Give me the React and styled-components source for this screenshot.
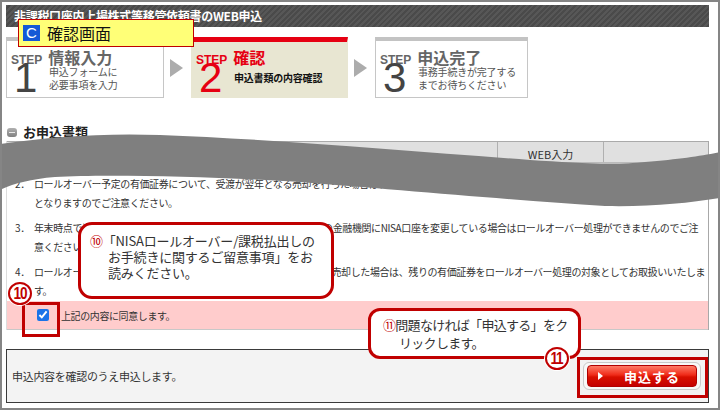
import React from 'react';
import styled, { createGlobalStyle } from 'styled-components';

const jp = `"Noto Sans CJK JP", "Liberation Sans", sans-serif`;
const latin = `"Liberation Sans", Arial, sans-serif`;
const red = '#c00000';

const GlobalStyle = createGlobalStyle`
    html, body { margin: 0; padding: 0; background: #fff; }
    body { font-family: ${jp}; color: #333; }
    * { box-sizing: border-box; }
`;

// Page frame (overlays below are placed from its padding box, so 2px less than page coords)
const Frame = styled.div`
    position: relative;
    width: 720px;
    height: 410px;
    border: 2px solid #858585;
    padding: 3px 9px 0 4px;
    overflow: hidden;
`;

const TitleBar = styled.div`
    height: 22px;
    padding-left: 8px;
    background: repeating-linear-gradient(135deg, #575757 0 2px, #4a4a4a 2px 4px);
    color: #fff;
    font: bold 12px/22px ${jp};
    letter-spacing: -0.3px;
`;

// Step indicator
const Steps = styled.div`
    display: flex;
    align-items: center;
    margin-top: 10px;
    height: 61px;
`;

const StepBox = styled.div`
    width: ${p => p.$w}px;
    height: 61px;
    background: ${p => (p.$active ? '#e8e6d2' : '#fff')};
    border: 1px solid ${p => (p.$active ? '#e8e6d2' : '#c6c6c6')};
    border-top: ${p => (p.$active ? '5px solid #e60012' : '4px solid #c3c3c3')};
    padding: ${p => (p.$active ? '3px' : '4px')} 0 0 4px;
`;

const StepHead = styled.div`
    display: flex;
    align-items: baseline;
    gap: 6px;
    height: 18px;
    line-height: 18px;
`;

const StepLabel = styled.span`
    font: bold 12px ${latin};
    color: ${p => (p.$active ? '#e60012' : '#666')};
`;

const StepTitle = styled.span`
    font: bold 16px ${jp};
    color: ${p => (p.$active ? '#e60012' : '#666')};
`;

const StepBody = styled.div`
    display: flex;
    align-items: center;
    margin-top: -3px;
`;

const StepNum = styled.div`
    width: 38px;
    padding-left: 3px;
    font: 42px/36px ${latin};
    color: ${p => (p.$active ? '#e60012' : '#444')};
`;

const StepDesc = styled.div`
    font: ${p => (p.$active ? 'bold' : 'normal')} 10px/13.5px ${jp};
    color: ${p => (p.$active ? '#111' : '#555')};
    letter-spacing: -0.2px;
`;

const StepArrow = styled.div`
    width: 0;
    height: 0;
    margin: 0 8px 0 6px;
    border-left: 13px solid #acacac;
    border-top: 9px solid transparent;
    border-bottom: 9px solid transparent;
`;

// Section heading
const Heading = styled.div`
    display: flex;
    align-items: center;
    gap: 6px;
    margin-top: 26px;
    padding-left: 1px;
    height: 16px;
    font: bold 13px/16px ${jp};
    color: #222;
`;

const HeadIcon = styled.span`
    position: relative;
    width: 10px;
    height: 9px;
    border-radius: 3px;
    background: linear-gradient(#b0b0b0, #808080);

    &::after {
        content: "";
        position: absolute;
        left: 2px;
        right: 2px;
        top: 4px;
        height: 1px;
        background: #e8e8e8;
    }
`;

// Table
const Table = styled.div`
    margin-top: 1px;
    border-left: 1px solid #ddd;
    border-right: 1px solid #a8a8a8;
`;

const HeaderRow = styled.div`
    display: grid;
    grid-template-columns: 490px 106px 1fr;
    height: 22px;
    background: #e0e0e0;
    border-top: 1px solid #aaa;
    border-bottom: 1px solid #bbb;
`;

const HeaderCell = styled.div`
    border-left: ${p => (p.$first ? 'none' : '1px solid #b0b0b0')};
    text-align: center;
    padding-top: 5px;
    font: 11px/15px ${jp};
    color: #333;
`;

const NoteList = styled.div`
    padding: 11px 0 1px 8px;
    overflow: hidden;
`;

const NoteItem = styled.div`
    display: flex;
    margin-bottom: ${p => (p.$last ? 0 : 6)}px;
    font: 10px/19px ${jp};
    letter-spacing: -0.4px;
    color: #333;
    white-space: nowrap;
`;

const NoteNum = styled.span`
    flex: none;
    width: 19px;
`;

const AgreeRow = styled.label`
    display: flex;
    align-items: center;
    height: 29px;
    padding-left: 30px;
    background: #ffcccc;
    border-bottom: 1px solid #c8c8c8;
    font: 10px ${jp};
    letter-spacing: -0.4px;
    color: #333;
`;

const Check = styled.input`
    width: 12px;
    height: 12px;
    margin: 0 12px 0 0;
    accent-color: #1a73e8;
`;

// Submit area
const SubmitBox = styled.div`
    display: flex;
    align-items: center;
    justify-content: space-between;
    margin-top: 19px;
    height: 54px;
    padding: 0 7px 0 5px;
    border: 1px solid #3a3a3a;
    background: #f3f3f3;
    font: 11px ${jp};
    letter-spacing: -0.3px;
    color: #333;
`;

const SubmitOuter = styled.div`
    width: 118px;
    height: 28px;
    padding: 2px 3px;
    border: 1px solid #c9c9c9;
    border-radius: 6px;
    background: #f8f8f8;
`;

const SubmitButton = styled.button`
    display: flex;
    align-items: center;
    width: 100%;
    height: 100%;
    padding: 0 0 0 10px;
    border: 1px solid #b00000;
    border-radius: 4px;
    background: linear-gradient(#ff7a66, #ef2a18 45%, #d81000 55%, #c40000);
    color: #fff;
    font: bold 13px ${jp};
    letter-spacing: 1px;
    cursor: pointer;
`;

const PlayMark = styled.span`
    width: 0;
    height: 0;
    margin-right: 21px;
    border-left: 5px solid #fff;
    border-top: 4px solid transparent;
    border-bottom: 4px solid transparent;
`;

// Annotation overlays
const ScreenLabel = styled.div`
    position: absolute;
    left: 16px;
    top: 17px;
    width: 176px;
    height: 28px;
    display: flex;
    align-items: center;
    gap: 7px;
    padding-left: 4px;
    border: 1px solid #c00000;
    background: #ffff77;
    font: 16px ${jp};
    color: #111;
`;

const LabelBadge = styled.span`
    width: 17px;
    height: 16px;
    background: #1559d6;
    color: #fff;
    font: 15px/16px ${latin};
    text-align: center;
`;

const Band = styled.svg`
    position: absolute;
    left: -2px;
    top: 123px;
`;

const Callout = styled.div`
    position: absolute;
    left: ${p => p.$x - 2}px;
    top: ${p => p.$y - 2}px;
    width: ${p => p.$w}px;
    height: ${p => p.$h}px;
    padding: ${p => p.$pad};
    border: 3px solid ${red};
    border-radius: ${p => p.$r}px;
    background: #fff;
    font: 13px/${p => p.$lh}px ${jp};
    letter-spacing: ${p => p.$ls}px;
    text-indent: ${p => p.$indent}px;
    white-space: nowrap;
    color: #333;
`;

const Circled = styled.span`
    color: ${red};
`;

const Highlight = styled.div`
    position: absolute;
    left: ${p => p.$x - 2}px;
    top: ${p => p.$y - 2}px;
    width: ${p => p.$w}px;
    height: ${p => p.$h}px;
    border: 3px solid ${red};
`;

const NumBadge = styled.div`
    position: absolute;
    left: ${p => p.$x - 2}px;
    top: ${p => p.$y - 2}px;
    width: 24px;
    height: 23px;
    display: flex;
    align-items: center;
    justify-content: center;
    border: 2px solid ${red};
    border-radius: 50%;
    background: #fff;
    box-shadow: 0 0 0 1px #fff;
    color: ${red};
    font: bold 17px/1 ${latin};
    letter-spacing: -1.5px;

    span {
        display: inline-block;
        transform: scaleX(0.8);
        margin-left: -1px;
    }
`;

const notes = [
    {
        num: '2．',
        lines: [
            'ロールオーバー予定の有価証券について、受渡が翌年となる売却を行った場合は、当該有価証券はロールオーバーの対象外',
            'となりますのでご注意ください。',
        ],
    },
    {
        num: '3．',
        lines: [
            '年末時点で当社にNISA口座が開設されていない場合、または既に他の金融機関にNISA口座を変更している場合はロールオーバー処理ができませんのでご注',
            '意ください。',
        ],
    },
    {
        num: '4．',
        lines: [
            'ロールオーバー予定の有価証券のうち、一部の銘柄のみを年末までに売却した場合は、残りの有価証券をロールオーバー処理の対象としてお取扱いいたしま',
            'す。',
        ],
    },
];

const steps = [
    { n: '1', title: '情報入力', desc: ['申込フォームに', '必要事項を入力'], w: 158 },
    { n: '2', title: '確認', desc: ['申込書類の内容確認'], w: 157, active: true },
    { n: '3', title: '申込完了', desc: ['事務手続きが完了する', 'までお待ちください'], w: 153 },
];

const App = () => {
    return (
        <>
            <GlobalStyle />
            <Frame>
                <TitleBar>非課税口座内上場株式等移管依頼書のWEB申込</TitleBar>

                <Steps>
                    {steps.map((s, i) => (
                        <React.Fragment key={s.n}>
                            {i > 0 && <StepArrow />}
                            <StepBox $w={s.w} $active={s.active}>
                                <StepHead>
                                    <StepLabel $active={s.active}>STEP</StepLabel>
                                    <StepTitle $active={s.active}>{s.title}</StepTitle>
                                </StepHead>
                                <StepBody>
                                    <StepNum $active={s.active}>{s.n}</StepNum>
                                    <StepDesc $active={s.active}>
                                        {s.desc.map(d => <div key={d}>{d}</div>)}
                                    </StepDesc>
                                </StepBody>
                            </StepBox>
                        </React.Fragment>
                    ))}
                </Steps>

                <Heading>
                    <HeadIcon />
                    お申込書類
                </Heading>

                <Table>
                    <HeaderRow>
                        <HeaderCell $first />
                        <HeaderCell>WEB入力</HeaderCell>
                        <HeaderCell />
                    </HeaderRow>
                    <NoteList>
                        {notes.map((n, i) => (
                            <NoteItem key={n.num} $last={i === notes.length - 1}>
                                <NoteNum>{n.num}</NoteNum>
                                <div>
                                    {n.lines.map(l => <div key={l}>{l}</div>)}
                                </div>
                            </NoteItem>
                        ))}
                    </NoteList>
                    <AgreeRow>
                        <Check type="checkbox" defaultChecked />
                        上記の内容に同意します。
                    </AgreeRow>
                </Table>

                <SubmitBox>
                    申込内容を確認のうえ申込します。
                    <SubmitOuter>
                        <SubmitButton type="button">
                            <PlayMark />
                            申込する
                        </SubmitButton>
                    </SubmitOuter>
                </SubmitBox>

                {/* annotations drawn over the screen */}
                <ScreenLabel>
                    <LabelBadge>C</LabelBadge>
                    確認画面
                </ScreenLabel>

                <Band width="720" height="90" viewBox="0 125 720 90">
                    <path
                        d="M0,144 C50,137 100,133 160,135 C270,139 410,151 530,160 C575,163 615,165 645,162 C680,159 700,156 720,152 L720,198 C690,203 650,207 605,206 C510,200 390,189 300,182 C220,177 110,174 55,177 C30,179 12,184 0,190 Z"
                        fill="#7f7f7f"
                    />
                </Band>

                <Callout $x={78} $y={222} $w={256} $h={77} $pad="8px 6px 0 27px" $r={14} $lh={16} $ls={-0.2} $indent={-18}>
                    <Circled>⑩</Circled>「NISAロールオーバー/課税払出しの<br />
                    お手続きに関するご留意事項」をお<br />
                    読みください。
                </Callout>

                <Callout $x={368} $y={308} $w={213} $h={51} $pad="5px 6px 0 28px" $r={12} $lh={18} $ls={-0.7} $indent={-16}>
                    <Circled>⑪</Circled>問題なければ「申込する」をク<br />
                    リックします。
                </Callout>

                <Highlight $x={22} $y={302} $w={38} $h={35} />
                <Highlight $x={577} $y={357} $w={131} $h={41} />

                <NumBadge $x={8} $y={282}><span>10</span></NumBadge>
                <NumBadge $x={545} $y={347}><span>11</span></NumBadge>
            </Frame>
        </>
    );
};

export default App;
